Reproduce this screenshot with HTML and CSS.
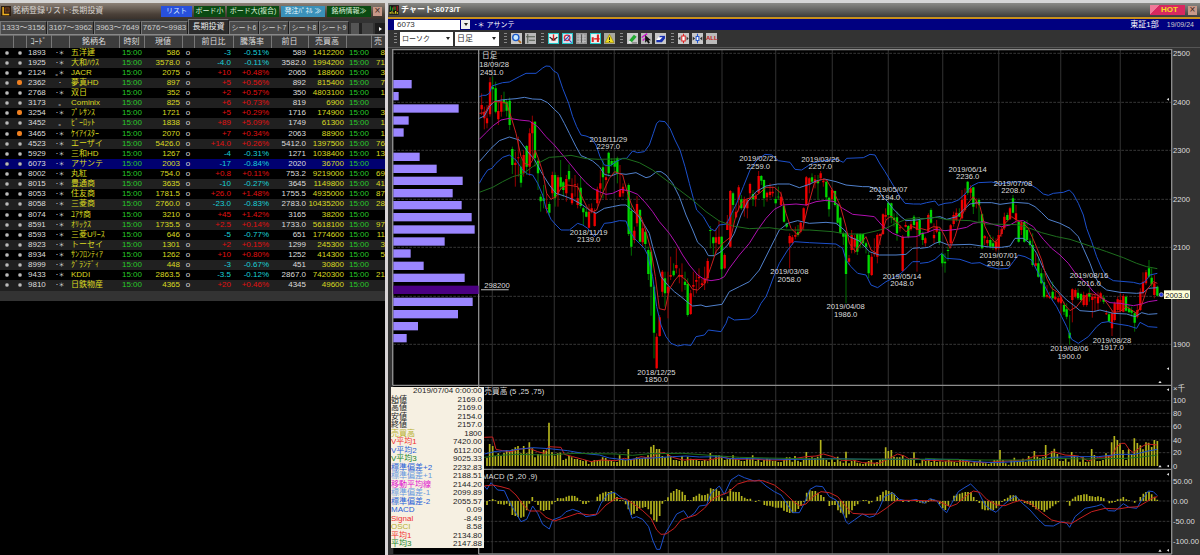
FILE: index.html
```html
<!DOCTYPE html>
<html lang="ja">
<head>
<meta charset="utf-8">
<title>チャート:6073/T</title>
<link rel="stylesheet" href="styles.css">
</head>
<body>
<main class="desk">
  <section class="panel list-panel">
    <header class="titlebar">
      <svg class="app-icon" viewBox="0 0 33 33"><rect width="33" height="33" fill="#2a1d12"/><path d="M7 3v25h20" fill="none" stroke="#f0b020" stroke-width="5"/><path d="M14 6h13v14H14z" fill="#402a18" stroke="#9a4a20" stroke-width="2"/></svg>
      <h1 class="title">銘柄登録リスト:長期投資</h1>
      <button class="chip chip-blue">リスト</button>
      <button class="chip chip-green">ボード小</button>
      <button class="chip chip-green chip-wide">ボード大(複合)</button>
      <button class="chip chip-sky">発注ﾊﾟﾈﾙ ≫</button>
      <button class="chip chip-green chip-mid">銘柄情報≫</button>
      <button class="close" aria-label="閉じる">×</button>
    </header>
    <nav class="tabs">
      <button class="tab tab-long">1333～3156</button><button class="tab tab-long">3167～3962</button><button class="tab tab-long">3963～7649</button><button class="tab tab-long">7676～9983</button><button class="tab tab-on">長期投資</button><button class="tab">シート6</button><button class="tab">シート7</button><button class="tab">シート8</button><button class="tab">シート9</button>
      <span class="tab-track"></span><button class="tab-next" aria-label="次へ"></button>
    </nav>
    <table class="quotes">
      <colgroup><col class="w13"><col class="w13"><col class="w25"><col class="w18"><col class="w50"><col class="w25"><col class="w38"><col class="w12"><col class="w39"><col class="w38"><col class="w37"><col class="w38"><col class="w25"><col class="w14"></colgroup>
      <thead><tr><th></th><th></th><th>ｺｰﾄﾞ</th><th></th><th>銘柄名</th><th>時刻</th><th>現値</th><th></th><th>前日比</th><th>騰落率</th><th>前日</th><th>売買高</th><th></th><th>売</th></tr></thead>
      <tbody id="quotes"></tbody>
    </table>
    <div class="list-foot"></div>
  </section>

  <section class="panel chart-panel">
    <header class="titlebar titlebar-gray">
      <svg class="app-icon" viewBox="0 0 33 33"><rect width="33" height="33" fill="#111" stroke="#777"/><path d="M5 4v14M12 8v12M20 5v12" stroke="#1f9a2c" stroke-width="4"/><path d="M16 5v10M27 3v17" stroke="#d22" stroke-width="3"/><path d="M4 29v-6M10 29v-8M16 29v-4M22 29v-9M28 29v-5" stroke="#e0d020" stroke-width="4"/></svg>
      <h2 class="title title-bold">チャート:6073/T</h2>
      <button class="hot">HOT</button>
      <button class="close" aria-label="閉じる">×</button>
    </header>
    <div class="symbolbar">
      <input class="code" value="6073" aria-label="銘柄コード"><button class="drop" aria-label="銘柄一覧"></button>
      <span class="symbol">･＊ アサンテ</span>
      <span class="market">東証1部</span>
      <span class="date">19/09/24</span>
    </div>
    <div class="toolbar">
      <i class="grip"></i>
      <label class="pick pick-wide"><select aria-label="チャート種類"><option>ローソク</option></select></label>
      <label class="pick"><select aria-label="足種"><option>日足</option></select></label>
      <div class="tools">
        <i class="grip"></i>
        <button class="tool" aria-label="拡大"><svg viewBox="0 0 32 32"><rect width="32" height="32" fill="#c8c8c8"/><path d="M20 20l9 9" stroke="#b06a20" stroke-width="5"/><circle cx="14" cy="13" r="9" fill="#c8e8ff" stroke="#1858c8" stroke-width="4"/></svg></button>
        <button class="tool" aria-label="目盛"><svg viewBox="0 0 32 32"><rect width="32" height="32" fill="#b8b8b8"/><path d="M8 3v27M3 11h26M12 21h17" stroke="#50584c" stroke-width="3"/></svg></button>
      </div>
      <div class="tools">
        <i class="grip"></i>
        <button class="tool" aria-label="売買"><svg viewBox="0 0 32 32"><rect width="32" height="32" fill="#28c8c8"/><rect x="3" y="3" width="26" height="26" fill="#eee"/><path d="M5 12q11 12 22 0M10 20h12" fill="none" stroke="#222" stroke-width="4"/><path d="M16 4v19" stroke="#d22" stroke-width="4"/></svg></button>
        <button class="tool" aria-label="検索"><svg viewBox="0 0 32 32"><rect width="32" height="32" fill="#28c8c8"/><rect x="3" y="3" width="26" height="26" fill="#dde"/><circle cx="15" cy="14" r="8" fill="#eee" stroke="#d03040" stroke-width="4"/><path d="M6 23l16-16M17 16l11 12" stroke="#2548c0" stroke-width="3"/></svg></button>
        <button class="tool" aria-label="表"><svg viewBox="0 0 32 32"><rect width="32" height="32" fill="#999"/><path d="M3 9h26M3 17h26M3 25h26M11 3v27M21 3v27" stroke="#bbb" stroke-width="3"/><path d="M16 4v24" stroke="#555" stroke-width="3"/></svg></button>
        <button class="tool" aria-label="比較"><svg viewBox="0 0 32 32"><rect width="32" height="32" fill="#28c8c8"/><rect x="3" y="3" width="26" height="26" fill="#eee"/><path d="M8 12v14M23 4v22" stroke="#d22" stroke-width="6"/><path d="M12 17h16" stroke="#d22" stroke-width="4"/></svg></button>
        <button class="tool" aria-label="警告"><svg viewBox="0 0 32 32"><rect width="32" height="32" fill="#a8a8a0"/><path d="M16 4L29 28H3z" fill="#f0e020" stroke="#a08800" stroke-width="2"/><path d="M16 12v8M16 23v3" stroke="#222" stroke-width="3"/></svg></button>
      </div>
      <div class="tools">
        <i class="grip"></i>
        <button class="tool" aria-label="描画"><svg viewBox="0 0 32 32"><rect width="32" height="32" fill="#c8c8c8"/><path d="M6 22L20 5l8 6-14 16z" fill="#20a830"/><path d="M6 22l-2 8 10-3z" fill="#eee"/><path d="M14 29h15" stroke="#333" stroke-width="2"/></svg></button>
        <button class="tool" aria-label="選択"><svg viewBox="0 0 32 32"><rect width="32" height="32" fill="#b8b8b8"/><path d="M2 13L18 2M5 22l6-6" stroke="#d010d0" stroke-width="4"/><path d="M12 6v22l5-5 4 8 5-3-4-7h7z" fill="#111"/></svg></button>
        <button class="tool" aria-label="消去"><svg viewBox="0 0 32 32"><rect width="32" height="32" fill="#c8c8c8"/><path d="M4 20l10-13h15L19 20z" fill="#fff"/><path d="M4 20h10l8-8H12l2-4h15v8l-9 11H4z" fill="#1830b0"/></svg></button>
      </div>
      <div class="tools">
        <i class="grip"></i>
        <button class="tool" aria-label="広げる"><svg viewBox="0 0 32 32"><rect width="32" height="32" fill="#c8c8c8"/><path d="M11 9h10v14H11z" fill="#fff" stroke="#d22" stroke-width="3"/><path d="M16 2v7M16 23v7" stroke="#d22" stroke-width="3"/><path d="M7 10v12l-6-6zM25 10v12l6-6z" fill="#333"/></svg></button>
        <button class="tool" aria-label="狭める"><svg viewBox="0 0 32 32"><rect width="32" height="32" fill="#c8c8c8"/><path d="M12 10h8v12h-8z" fill="#fff" stroke="#25c" stroke-width="3"/><path d="M16 2v7M16 23v7" stroke="#25c" stroke-width="3"/><path d="M2 10v12l7-6zM30 10v12l-7-6z" fill="#333"/></svg></button>
        <button class="tool tool-all">ALL</button>
      </div>
    </div>
    <div class="chart-wrap">
      <svg id="chart" class="chart" viewBox="6 -6 2436 1521" role="img" aria-label="日足チャート"></svg>
      <table class="readout">
        <tr><td colspan="2">2019/07/04 0:00:00</td></tr>
        <tr><th>始値</th><td>2169.0</td></tr>
        <tr><th>高値</th><td>2169.0</td></tr>
        <tr><th>安値</th><td>2154.0</td></tr>
        <tr><th>終値</th><td>2157.0</td></tr>
        <tr><th class="c-olive">売買高</th><td>1800</td></tr>
        <tr><th class="c-red">V平均1</th><td>7420.00</td></tr>
        <tr><th class="c-blue">V平均2</th><td>6112.00</td></tr>
        <tr><th class="c-green">V平均3</th><td>9025.33</td></tr>
        <tr><th class="c-blue">標準偏差+2</th><td>2232.83</td></tr>
        <tr><th class="c-sky">標準偏差+1</th><td>2188.51</td></tr>
        <tr><th class="c-pink">移動平均線</th><td>2144.20</td></tr>
        <tr><th class="c-sky">標準偏差-1</th><td>2099.89</td></tr>
        <tr><th class="c-blue">標準偏差-2</th><td>2055.57</td></tr>
        <tr><th class="c-blue">MACD</th><td>0.09</td></tr>
        <tr><th class="c-red">Signal</th><td>-8.49</td></tr>
        <tr><th class="c-olive">OSCI</th><td>8.58</td></tr>
        <tr><th class="c-red">平均1</th><td>2134.80</td></tr>
        <tr><th class="c-green">平均3</th><td>2147.88</td></tr>
      </table>
    </div>
  </section>
</main>
<script src="app.js"></script>
</body>
</html>
```
FILE: styles.css
```css
* { box-sizing: border-box; }
body { margin: 0; background: #000; color: #ddd; font-family: "Liberation Sans", "Noto Sans CJK JP", sans-serif; font-size: 8px; line-height: 10px; }
button, input, select { font: inherit; color: inherit; border: 0; border-radius: 0; padding: 0; margin: 0; }
.desk { display: grid; grid-template-columns: minmax(0, 388fr) minmax(0, 812fr); min-height: 100vh; border-top: 3px solid #d6d6d6; }
.panel { min-width: 0; overflow: hidden; }
.list-panel { background: #000; border-right: 3px solid #d8d4d6; }
.titlebar { display: flex; align-items: center; height: 16px; padding: 0 3px 0 1px; gap: 2px; background: linear-gradient(#8c8177, #4a4038 70%, #3a322c); }
.titlebar-gray { height: 14px; background: linear-gradient(#8a8a86, #3c3c3a); }
.app-icon { width: 10px; height: 10px; flex: none; }
.title { margin: 0 auto 0 0; font-size: 8px; font-weight: 400; color: #d8d4d0; white-space: nowrap; }
.title-bold { font-weight: 700; color: #fff; }
.chip { height: 11px; width: 31px; font-size: 7px; line-height: 10px; color: #d8f0d8; white-space: nowrap; }
.chip-blue { background: #2850dc; color: #d8e8ff; }
.chip-green { background: #0a4a12; }
.chip-wide { width: 52px; }
.chip-mid { width: 44px; }
.chip-sky { background: #3a90b8; width: 44px; color: #e8f8ff; }
.close { width: 9px; height: 9px; line-height: 8px; font-size: 10px; background: #c89888; color: #402820; }
.tabs { display: flex; align-items: flex-end; height: 16px; background: #333; border-bottom: 1px solid #888; overflow: hidden; }
.tab { flex: 0 0 30px; height: 13px; white-space: nowrap; background: #4a4a4a; border: 1px solid #777; border-right-color: #1c1c1c; border-bottom: 0; color: #ccc; font-size: 7px; line-height: 12px; }
.tab-long { flex-basis: 47px; font-size: 8px; }
.tab-on { flex-basis: 41px; height: 15px; background: #2c2c2c; color: #eee; font-size: 8px; }
.tab-track { flex: 1; height: 11px; margin: 0 2px; background: linear-gradient(90deg, #555 8px, #222 8px, #222 11px, #444 11px); }
.tab-next { width: 10px; height: 11px; background: #1c1c1c; }
.tab-next::before { content: ""; display: block; width: 0; margin-left: 4px; border: 2px solid transparent; border-left: 3px solid #fff; }

.quotes { width: 100%; table-layout: fixed; border-collapse: collapse; }
.w12 { width: 12px; } .w13 { width: 13px; } .w14 { width: 14px; } .w18 { width: 18px; } .w25 { width: 25px; }
.w37 { width: 37px; } .w38 { width: 38px; } .w39 { width: 39px; } .w50 { width: 50px; }
.quotes th { height: 12px; padding: 0; background: #3c3c3c; border-right: 1px solid #777; border-top: 1px solid #666; font-weight: 400; line-height: 10px; color: #ddd; white-space: nowrap; }
.quotes td { height: 10px; padding: 0; line-height: 10px; font-size: 8px; text-align: right; white-space: nowrap; }
.quotes tr:nth-child(8n) td { height: 11px; }
.quotes tr:nth-child(even) td { background: #202020; }
.quotes tr.on td { background: #000070; }
.quotes .l { text-align: left; padding-left: 2px; }
.quotes .c { text-align: center; }
.quotes .mark { text-align: center; font-size: 6px; }
.yellow { color: #dada20; } .green { color: #28c828; } .cyan { color: #18d0d8; } .red { color: #e01010; } .white { color: #ddd; }
.quotes .pad { padding-right: 2px; }
.dot { display: block; width: 4px; height: 4px; margin: 0 auto; border-radius: 2px; background: radial-gradient(#ddd, #555); }
.dot-hot { width: 5px; height: 5px; background: #f08020; }
.list-foot { height: 10px; background: #333; }

.chart-panel { background: #333; }
.symbolbar { display: flex; align-items: center; height: 13px; padding: 0 6px; border-top: 2px solid #c8901c; background: #000080; color: #fff; }
.code { width: 66px; height: 10px; padding: 0 3px; background: #fff; color: #333; }
.drop { width: 9px; height: 9px; margin: 0 4px 0 1px; background: #eee; }
.drop::before, .pick::after { content: ""; display: block; width: 0; margin: 0 auto; border: 2px solid transparent; border-top: 3px solid #222; border-bottom: 0; }
.symbol { margin-right: auto; font-size: 7px; }
.market { margin-right: 8px; }
.date { color: #ccc; font-size: 7px; }
.toolbar { display: flex; align-items: center; height: 18px; padding-left: 5px; gap: 2px; border-bottom: 1px solid #555; }
.grip { width: 3px; height: 11px; margin: 0 1px; background: repeating-linear-gradient(#888 0 1px, #333 1px 3px); }
.pick { display: flex; align-items: center; width: 44px; height: 14px; background: #fff; }
.pick-wide { width: 53px; font-size: 7px; }
.pick select { flex: 1; min-width: 0; padding-left: 2px; appearance: none; background: none; color: #333; }
.pick::after { margin: 0 3px 0 0; }
.tools { display: flex; align-items: center; gap: 3px; margin-left: 2px; }
.tool { width: 11px; height: 11px; background: #bbb; }
.tool svg { display: block; width: 11px; height: 11px; }
.tool-all { color: #c01818; font-size: 6px; font-weight: 700; line-height: 11px; }
.hot { width: 35px; height: 10px; line-height: 10px; margin-right: 1px; padding-left: 4px; background: linear-gradient(135deg, #f07898 7px, #d82860 7px); color: #f0e020; font-weight: 700; }

.chart-wrap { position: relative; }
.chart { display: block; width: 100%; height: auto; }
.chart text { font-family: "Liberation Sans", "Noto Sans CJK JP", sans-serif; font-size: 23px; fill: #ddd; }
.chart .mid { text-anchor: middle; }
.chart .tag { fill: #222; }
.chart polyline { fill: none; stroke-width: 3; }
.grid { stroke: #363636; stroke-width: 3; fill: none; }
.grid-v { stroke: #262626; stroke-width: 4; fill: none; }
.frame { stroke: #8c8c8c; stroke-width: 4; fill: none; }
.s-blue { stroke: #1c50cc; } .s-sky { stroke: #5080cc; } .s-pink { stroke: #b010b0; } .s-green { stroke: #1e6e1e; } .s-red { stroke: #c82020; }
.up-w { stroke: #960000; stroke-width: 3; } .up-b { stroke: #f00000; stroke-width: 7; }
.dn-w { stroke: #006e00; stroke-width: 3; } .dn-b { stroke: #00d800; stroke-width: 7; }
.bar { stroke: #b4b41c; stroke-width: 5; }
.readout { position: absolute; left: 3px; top: 339px; width: 93px; border-collapse: collapse; background: #f6f0e2; color: #222; }
.readout th, .readout td { padding: 0; height: 8px; line-height: 8px; font-weight: 400; text-align: left; white-space: nowrap; }
.readout tr:nth-child(even) > * { height: 9px; line-height: 9px; }
.readout td { text-align: right; padding-right: 2px; }
.readout .c-olive { color: #b8b030; } .readout .c-red { color: #f03030; } .readout .c-blue { color: #2860d8; }
.readout .c-green { color: #208828; } .readout .c-sky { color: #6898e0; } .readout .c-pink { color: #e010d0; }
```
FILE: app.js
```js
const quotes = `1893|･＊|五洋建|586|-3|-0.51%|589|1412200|8
1925|･＊|大和ﾊｳｽ|3578.0|-4.0|-0.11%|3582.0|1994200|71
2124|｡＊|JACR|2075|+10|+0.48%|2065|188600|3
2362|･|夢真HD|897|+5|+0.56%|892|815400|7
2768|･＊|双日|352|+2|+0.57%|350|4803100|1
3173|｡|Cominix|825|+6|+0.73%|819|6900|
3254|･＊|ﾌﾟﾚｻﾝｽ|1721|+5|+0.29%|1716|174900|3
3452|｡|ﾋﾞｰﾛｯﾄ|1838|+89|+5.09%|1749|61300|1
3465|･＊|ｹｲｱｲｽﾀｰ|2070|+7|+0.34%|2063|88900|1
4523|･＊|エーザイ|5426.0|+14.0|+0.26%|5412.0|1397500|76
5929|･＊|三和HD|1267|-4|-0.31%|1271|1038400|13
6073|･＊|アサンテ|2003|-17|-0.84%|2020|36700|
8002|･＊|丸紅|754.0|+0.8|+0.11%|753.2|9219000|69
8015|･＊|豊通商|3635|-10|-0.27%|3645|1149800|41
8053|･＊|住友商|1781.5|+26.0|+1.48%|1755.5|4935000|87
8058|･＊|三菱商|2760.0|-23.0|-0.83%|2783.0|10435200|28
8074|･＊|ﾕｱｻ商|3210|+45|+1.42%|3165|38200|
8591|･＊|ｵﾘｯｸｽ|1735.5|+2.5|+0.14%|1733.0|5618100|97
8593|･＊|三菱Uﾘｰｽ|646|-5|-0.77%|651|1774600|11
8923|･＊|トーセイ|1301|+2|+0.15%|1299|245300|3
8934|･＊|ｻﾝﾌﾛﾝﾃｨｱ|1262|+10|+0.80%|1252|414300|5
8999|･＊|ｸﾞﾗﾝﾃﾞｨ|448|-3|-0.67%|451|30800|
9433|･＊|KDDI|2863.5|-3.5|-0.12%|2867.0|7420300|21
9810|･＊|日鉄物産|4365|+20|+0.46%|4345|49600|`.split('\n').map(r => r.split('|'));
const hot = ['2362', '3254', '3465'];
document.getElementById('quotes').innerHTML = quotes.map(q => {
  const tone = q[4][0] === '+' ? 'red' : 'cyan';
  return `<tr class="${q[0] === '6073' ? 'on' : ''}"><td><i class="dot"></i></td><td><i class="dot ${hot.includes(q[0]) ? 'dot-hot' : ''}"></i></td>
<td class="l white">${q[0]}</td><td class="mark white">${q[1]}</td><td class="l yellow">${q[2]}</td><td class="pad green">15:00</td><td class="pad yellow">${q[3]}</td><td class="c white">o</td>
<td class="pad ${tone}">${q[4]}</td><td class="pad ${tone}">${q[5]}</td><td class="pad white">${q[6]}</td><td class="pad yellow">${q[7]}</td><td class="pad green">15:00</td><td class="yellow">${q[8]}</td></tr>`;
}).join('');

let out = '';
const add = s => { out += s; };
const path = (cls, d) => add(`<path class="${cls}" d="${d}"/>`);
const text = (x, y, s, cls = '') => add(`<text class="${cls}" x="${x}" y="${y}">${s}</text>`);

// plot areas, grid and frames
add('<rect x="22" y="0" width="2335" height="1512" fill="#000"/>');
path('grid-v', [319, 505, 685, 847, 1008, 1169, 1339, 1507, 1670, 1838, 2024, 2203].map(x => `M${x} 0V1512`).join(''));
add(`<path class="grid" stroke-dasharray="8 4" d="${[[22, 10], [22, 157], [22, 301], [22, 448], [22, 592], [22, 739], [22, 883], [278, 1052], [278, 1090], [278, 1130], [278, 1170], [278, 1208], [278, 1293], [278, 1353], [278, 1414], [278, 1475]].map(p => `M${p[0]} ${p[1]}H2357`).join('')}"/>`);
path('frame', 'M20 1006V-1H2357V1512M278 0V1512M20 1006H2357M278 1258H2357M278 1512H2357');

// volume by price
[77, 38, 218, 68, 53, 0, 101, 152, 230, 200, 227, 257, 266, 176, 74, 113, 236, 278, 260, 216, 96, 62].forEach((x, i) => {
  if (x) add(`<rect x="22" y="${Math.round(90 + i * 36.3)}" width="${x - 22}" height="25" fill="${i === 17 ? '#4b0082' : '#9b86ff'}"/>`);
});
text(295, 715, '298200');
path('frame', 'M285 719H368');

// overlays: [class, dx, dy, points]
const lines = [
['s-blue', 0, 0, '280,140 290,136 300,136 310,130 318,108 330,104 350,98 370,96 400,80 420,70 450,70 470,54 480,48 492,49 502,62 515,70 530,115 548,160 560,200 572,230 585,255 600,258 615,264 630,285 642,320 655,345 672,348 690,335 710,325 722,325 740,303 755,308 775,305 790,285 802,250 812,220 820,213 837,215 852,235 867,270 882,300 897,350 910,400 922,445 932,480 952,500 972,535 987,543 999,525 1022,522 1037,490 1052,460 1072,410 1092,360 1112,330 1137,313 1157,315 1177,332 1212,337 1227,358 1247,360 1267,347 1282,338 1312,332 1352,328 1372,337 1382,325 1432,323 1452,313 1467,315 1482,342 1497,365 1512,390 1527,415 1542,440 1557,460 1582,462 1602,462'],
['s-blue', 1602, 210, '0,253 20,248 45,243 55,256 75,250 95,248 115,240 135,222 155,198 175,188 215,186 240,192 270,186 300,186 325,190 350,205 370,222 385,226 400,220 430,217 448,210 460,222 475,250 490,285 500,325 515,365 530,410 545,445 560,470 580,482 640,487 660,492 675,485 690,465 712,460'],
['s-sky', 0, 0, '280,205 295,198 310,170 325,155 345,150 365,148 390,146 415,142 440,147 465,148 485,158 505,178 520,192 535,220 550,250 570,290 585,317 600,323 620,333 640,350 655,373 675,378 695,370 720,373 750,368 780,383 792,380 812,365 825,365 840,375 860,400 880,440 900,495 920,540 935,577 955,595 967,617 985,617 1005,605 1025,585 1045,550 1065,495 1085,455 1110,425 1140,408 1175,402 1210,402 1240,413 1270,403 1290,393 1315,387 1350,395 1380,405 1430,410 1450,410 1475,418 1490,440 1505,455 1520,475 1545,500 1560,512 1590,510 1602,508'],
['s-sky', 1602, 210, '0,297 25,295 60,290 80,298 110,290 130,270 150,252 175,248 215,248 240,253 285,247 325,250 345,260 365,278 385,298 420,310 450,325 475,350 490,385 510,430 525,470 540,495 560,510 600,517 650,520 670,518 685,505 712,503'],
['s-pink', 0, 0, '280,268 300,248 320,228 345,210 370,205 400,210 430,213 455,230 480,260 505,285 530,315 555,345 575,370 600,398 620,415 640,425 660,433 680,430 705,418 730,423 755,433 780,460 800,485 820,515 850,550 870,580 890,615 910,645 935,675 955,688 975,692 1000,688 1015,680 1030,655 1060,615 1090,580 1115,540 1140,505 1165,478 1190,465 1230,462 1260,465 1290,455 1320,451 1345,455 1370,475 1400,493 1440,497 1465,500 1490,528 1520,550 1550,562 1590,560 1602,555'],
['s-pink', 1602, 210, '0,342 20,338 45,328 75,332 110,328 140,322 160,310 190,305 215,312 245,320 270,315 290,303 310,302 340,320 370,358 395,385 420,405 445,430 470,465 500,490 520,515 545,535 570,548 600,550 640,557 665,552 685,545 712,541'],
['s-sky', 0, 0, '280,335 295,318 315,295 340,272 370,261 400,270 425,305 445,328 465,365 490,405 510,430 535,438 560,448 590,465 610,480 630,490 655,475 680,470 705,465 720,465 735,478 755,495 775,525 790,550 800,590 812,630 825,680 845,705 865,725 885,740 905,757 920,768 945,765 960,770 1008,763 1030,725 1060,710 1090,695 1120,660 1150,600 1180,540 1205,520 1235,512 1270,520 1320,517 1350,520 1375,540 1390,560 1420,573 1450,605 1480,615 1530,615 1560,613 1580,595 1602,593'],
['s-sky', 1602, 210, '0,385 25,382 45,370 60,365 85,375 150,373 185,378 215,382 245,382 270,378 285,355 310,355 330,370 350,400 370,445 395,490 420,520 440,540 460,555 480,572 520,575 540,570 580,580 620,582 645,590 665,578 685,583 712,581'],
['s-blue', 0, 0, '280,400 290,382 305,360 318,355 330,340 350,322 370,315 390,330 410,360 425,372 440,375 455,400 470,435 480,475 495,508 510,525 525,540 550,540 575,520 590,525 605,535 625,560 640,545 655,520 675,518 700,512 720,513 730,540 745,565 760,580 775,595 785,615 800,680 812,770 825,825 840,860 855,880 875,888 895,884 915,886 930,860 955,855 967,840 1005,845 1020,820 1027,800 1045,810 1090,807 1110,790 1125,760 1140,740 1150,715 1165,675 1180,640 1205,600 1225,575 1270,578 1350,582 1370,595 1380,630 1395,650 1415,670 1440,675 1455,705 1475,713 1500,695 1520,685 1545,670 1565,650 1580,635 1602,635'],
['s-blue', 1602, 210, '0,430 25,427 45,418 65,400 80,415 120,418 155,430 180,428 205,440 235,447 265,445 280,425 295,405 315,410 335,420 350,450 370,490 390,530 410,560 425,590 440,620 455,658 475,670 490,660 505,650 530,620 545,608 565,605 580,610 625,617 650,625 660,607 685,620 712,622'],
['s-green', 0, 0, '280,427 320,412 350,395 380,380 410,372 440,350 465,335 490,322 520,320 555,316 600,326 640,328 720,326 760,338 800,360 840,390 880,420 920,450 960,485 1000,513 1040,528 1090,536 1150,533 1200,540 1270,540 1340,545 1380,552 1430,552 1470,543 1500,535 1530,520 1560,508 1602,503'],
['s-green', 1602, 210, '0,297 50,292 80,299 150,302 200,312 290,314 330,325 365,338 410,350 450,358 510,378 560,395 610,413 650,430 680,440 712,446'],
['s-red', 0, 0, '280,190 297,188 310,165 325,155 345,155 362,160 375,200 390,250 405,320 415,340 430,345 440,330 447,300 457,325 470,365 482,430 495,448 510,440 525,415 545,405 575,410 590,445 605,475 620,485 632,480 650,430 670,385 686,365 710,375 722,420 735,460 750,490 765,500 780,545 795,600 808,680 820,776 837,780 850,718 867,690 880,675 900,690 920,718 935,720 957,700 975,650 990,605 1010,580 1035,560 1050,495 1065,460 1080,448 1105,440 1120,430 1140,412 1165,412 1185,430 1200,490 1215,535 1235,555 1250,535 1267,465 1285,400 1305,388 1322,390 1345,430 1362,465 1380,530 1390,580 1408,605 1425,580 1440,560 1455,600 1472,610 1485,560 1500,510 1515,498 1535,520 1560,545 1580,530 1602,540'],
['s-red', 1602, 210, '0,325 20,330 40,320 60,322 75,350 90,385 105,350 120,300 140,255 160,230 180,260 195,320 210,350 225,367 240,350 255,310 275,290 290,300 310,310 325,325 345,370 365,420 380,475 395,505 415,518 435,555 450,572 470,560 485,540 505,520 530,525 550,535 565,555 580,577 600,575 620,560 635,570 650,580 665,555 680,510 700,485 712,490'],
['s-red', 0, 990, '295,172 320,171 330,208 350,212 375,215 400,207 430,205 455,215 475,220 488,200 525,202 535,223 560,230 590,238 615,245 645,240 690,242 715,235 740,240 765,230 795,235 815,220 835,218 860,232 890,240 930,238 965,240 1010,232 1050,238 1100,237 1140,240 1200,240 1260,230 1290,228 1312,222 1340,230 1370,242 1400,240 1430,248 1480,250 1510,235 1535,222 1555,228 1570,237 1590,235 1617,242'],
['s-blue', 0, 990, '295,222 330,214 370,212 395,208 440,203 490,206 545,212 590,220 640,225 670,234 720,240 760,235 800,234 860,230 900,228 940,231 1000,230 1030,236 1100,236 1200,238 1280,238 1340,236 1450,238 1617,238'],
['s-green', 0, 990, '295,232 340,226 390,223 480,225 570,220 690,222 740,226 790,221 890,220 960,225 1060,232 1150,234 1300,237 1617,238'],
['s-red', 1617, 990, '0,240 60,243 120,244 180,248 230,244 300,240 330,228 365,226 385,215 420,225 460,228 490,243 520,232 560,230 575,200 590,190 600,190 612,208 625,218 645,203 665,192 697,195'],
['s-blue', 1617, 990, '0,238 100,238 150,245 210,248 270,245 340,240 380,232 450,230 520,230 580,223 630,223 665,214 697,208'],
['s-green', 1617, 990, '0,235 60,238 180,240 300,240 380,235 480,237 600,235 640,232 697,225'],
['s-blue', 0, 990, '295,318 303,328 315,308 335,330 355,332 370,365 390,400 405,425 422,418 440,378 455,400 470,433 490,447 500,420 525,410 540,395 560,388 580,395 600,410 630,405 645,370 665,342 685,337 705,352 722,362 738,415 752,410 770,418 788,440 800,480 812,508 822,508 835,465 850,440 872,402 893,392 907,413 925,400 940,378 962,375 975,340 1000,318 1015,343 1035,300 1058,285 1075,293 1105,303 1120,300 1140,318 1165,335 1185,345 1205,375 1220,398 1240,398 1255,370 1272,328 1290,318 1310,320 1330,350 1350,360 1370,395 1380,425 1388,432 1405,420 1430,402 1450,412 1465,408 1480,385 1495,350 1520,338 1540,358 1565,363 1590,358 1617,370'],
['s-red', 0, 990, '295,318 320,315 345,320 370,327 390,345 410,372 430,393 460,393 480,412 505,423 540,412 575,400 610,405 635,402 660,375 690,355 720,357 740,370 770,392 795,415 812,450 825,463 840,462 865,445 885,420 905,413 930,405 955,385 980,357 1000,347 1025,338 1055,312 1085,303 1130,302 1165,315 1195,338 1220,362 1240,377 1260,372 1280,350 1305,335 1330,338 1355,350 1380,380 1400,400 1440,403 1475,402 1500,385 1530,362 1560,361 1617,362'],
['s-blue', 1617, 990, '0,368 15,356 35,362 50,385 65,398 80,370 100,335 120,322 137,312 160,335 180,375 195,387 213,397 235,375 255,358 272,347 290,368 315,390 340,418 360,437 385,438 410,425 425,430 434,442 450,410 480,385 515,378 530,373 550,392 570,393 595,371 612,382 635,385 650,360 670,333 685,335 697,347'],
['s-red', 1617, 990, '0,362 40,363 75,380 95,372 120,350 145,333 165,337 185,358 215,375 240,377 265,367 290,360 320,373 350,398 380,420 410,427 440,430 465,415 500,395 540,385 580,387 610,382 640,380 665,365 680,355 697,350']
];

// candles: direction, x, high, body top, body bottom, low
const candles = [
[0, 0, 'r287,130,165,178,195 r295,170,185,205,238 r303,165,205,220,235 r312,82,97,193,200 g320,80,110,118,150 g329,95,115,185,190 r337,155,183,208,225 r346,135,155,185,200 g354,125,150,160,185 g362,150,155,182,200 g371,143,152,225,240 g379,290,297,345,372 r388,305,338,345,410 r397,260,322,325,380 g405,325,350,398,412 r413,300,315,370,380 g422,285,288,350,375 r431,235,250,350,378 r439,197,215,250,330 g447,213,215,325,350 g456,325,332,370,420 g464,432,440,454,485 g473,405,445,453,475 r482,430,473,476,490 g490,455,462,488,498 r499,365,375,430,445 g507,367,375,445,470 r516,375,382,432,470 g524,330,382,410,420 g532,393,397,420,440 r541,375,387,430,455 g549,343,363,388,395 r558,385,430,460,465 r567,375,403,406,440 r575,400,445,465,475 g584,380,413,468,475 g592,470,475,487,528 g601,475,485,500,502 r609,462,485,533,535 r617,460,475,487,490 r626,475,488,528,530 r634,410,418,460,470 r643,360,400,416,440 g651,330,352,382,445 r660,345,382,390,450 g668,305,308,370,380 g677,325,333,345,350 g686,325,332,350,375 g694,320,325,370,400 r702,345,420,440,442 r711,400,410,430,440 g728,400,405,552,558 g736,460,482,590,617 r745,530,542,570,580 r753,438,462,520,530 g762,477,480,575,577 r770,515,535,577,590 g778,540,545,582,597 g787,590,600,672,690 g795,600,605,710,797 g804,705,710,848,925'],
[792, 210, 'r20,640,650,745,748 r29,585,592,648,650 r37,450,455,515,530 g45,455,475,520,560 r54,455,500,520,595 r62,410,465,470,480 g71,430,452,466,470 r79,385,435,445,460 r88,445,465,470,490 r96,430,465,470,515 g105,455,485,495,510 g113,475,492,585,590 r122,510,520,582,585 r130,455,495,500,530 r139,460,480,485,520 r147,445,470,475,505 r156,475,490,495,500 r164,440,475,490,510 r173,415,423,475,490 g181,318,330,333,385 g190,350,352,370,410 r198,325,352,368,400 r207,300,350,372,375 g215,348,350,448,475 r224,400,405,445,448 r232,285,305,330,330 r241,210,213,380,383 g249,215,220,255,320 r258,250,275,292,295 r266,195,202,240,275 g274,225,238,265,270 r283,230,238,265,290 r292,235,240,265,295 r300,188,192,220,240 g309,210,222,238,258 r317,218,228,238,260 r326,153,168,218,222 g334,165,168,182,195 g342,178,180,235,260 r351,215,218,232,245 r360,190,215,225,235 r368,200,215,220,230 g377,230,237,250,253 g385,200,230,232,240 r393,215,230,255,258 g402,250,258,305,308 g410,308,310,320,325 r419,340,348,370,445 r427,345,352,368,375 r436,320,345,350,358 g444,315,337,345,350 r452,305,308,335,340 r461,262,265,303,330 r469,168,172,256,258 r478,172,175,195,220 g486,160,172,185,190 r495,165,178,188,205 g504,165,183,190,240 r512,153,160,175,178 r520,175,182,187,200 g529,183,185,232,245 g537,230,233,268,290 r546,205,210,238,245 g555,212,213,255,260 g563,250,253,308,312 g571,290,293,338,342 g580,335,340,350,375 g588,335,340,462,550 r597,405,415,425,435 r605,330,345,390,400 r614,345,355,380,400 g622,340,342,395,405 g631,340,342,365,385 g639,340,342,370,380 g648,365,370,380,400 g656,395,405,460,475 r665,400,410,465,468 r673,355,400,403,410 r682,340,345,410,430 r690,340,342,348,375 r699,280,283,342,345 r707,265,285,290,300 g715,245,248,285,295 g724,248,250,293,310 g732,280,293,300,320 g741,275,292,340,362 r750,315,322,325,335 r758,345,350,453,455 r767,305,315,320,322 g775,315,318,350,355 r783,300,313,328,332 g792,285,290,315,325 r801,298,305,330,455 g809,295,300,345,350 g818,335,338,360,375 r826,350,355,370,380'],
[1602, 210, 'r25,280,285,335,338 g33,265,270,308,312 r42,310,345,355,370 r50,300,320,335,340 g58,325,335,368,375 g67,395,402,430,440 g75,400,425,430,458 g84,380,390,393,422 r92,312,316,370,375 r101,275,285,312,320 r109,265,278,300,305 g118,265,280,290,290 r126,210,240,295,298 r135,205,225,270,275 g143,183,185,218,225 r152,195,205,218,235 g160,200,202,260,282 r169,235,245,250,265 g177,235,240,255,310 g186,280,283,385,388 r194,345,348,355,375 r202,350,360,370,380 g211,345,360,380,385 g219,350,370,380,390 r228,355,365,388,395 r236,330,345,385,390 r245,320,328,342,350 r253,278,290,325,330 g262,278,285,300,305 r270,260,265,298,300 g279,225,235,278,280 r288,255,280,300,310 g296,300,305,365,368 r304,300,310,330,345 g313,303,306,365,368 g321,300,330,360,362 g330,355,362,375,380 g338,340,375,435,440 r347,400,430,437,440 g355,415,430,470,473 g364,445,460,490,493 g372,460,487,530,535 r381,495,525,530,535 r389,515,528,533,537 g398,485,515,535,540 r406,515,530,538,540 r415,530,535,545,550 r423,525,532,550,585 g432,545,555,575,585 g440,550,568,590,598 g449,585,638,655,675 r457,505,508,540,607 r466,505,510,530,535 g474,505,518,535,540 g483,518,522,540,548 r491,515,525,555,560 r500,520,525,555,560 g508,505,520,530,545 r517,525,530,540,593 r525,525,530,535,575 r534,515,530,550,570 r542,515,520,535,545 g551,525,533,545,552 r559,570,580,583,585 g567,575,583,605,607 r576,570,580,625,648 r584,545,550,600,605 r593,530,538,570,575 r601,520,540,572,575 r610,522,528,575,577 g618,527,530,572,575 g627,555,565,577,580 g635,560,570,578,590 g644,575,580,608,635 r652,555,570,590,595 r661,505,515,570,573 r669,457,485,520,530 r678,450,457,490,495 g687,420,445,470,475 g695,445,473,493,500 r703,465,490,525,535 g712,497,500,527,530']
];
const d = { rw: '', rb: '', gw: '', gb: '' };
candles.forEach(([dx, dy, s]) => s.split(' ').forEach(c => {
  const k = c[0], [x, h, t, b, l] = c.slice(1).split(',').map(Number);
  d[k + 'w'] += `M${x + dx} ${h + dy}V${l + dy}`;
  d[k + 'b'] += `M${x + dx} ${t + dy}V${b + dy}`;
}));
path('up-w', d.rw); path('dn-w', d.gw); path('up-b', d.rb); path('dn-b', d.gb);

// evenly spaced bars between two x positions
const bars = (x0, x1, base, tops) => path('bar', tops.map((t, i) => `M${Math.round(x0 + (x1 - x0) * i / (tops.length - 1))} ${base}V${t}`).join(''));
const volume = [
[303, 820, [233,192,198,228,220,228,219,211,215,208,202,198,220,198,220,187,205,232,222,224,210,212,128,217,227,220,218,240,236,228,232,237,237,240,243,240,252,246,240,240,240,232,234,240,243,245,246,226,240,240,207,240,236,232,236,235,232,226,200,195,207,207]],
[829, 1609, [228,232,222,230,240,240,243,228,243,230,236,238,240,243,243,240,243,219,238,226,226,228,240,238,236,226,238,240,243,243,232,238,226,243,236,246,240,236,238,243,243,246,246,240,232,232,245,228,242,246,240,216,235,232,234,230,180,234,240,246,236,246,230,244,248,215,250,243,240,248,250,252,248,243,240,250,246,240,236,202,213,210,230,232,232,225,240,240,234,217,250,250,240]],
[1619, 2314, [243,240,246,238,246,244,246,244,240,244,246,248,240,240,244,246,250,246,248,240,248,250,252,246,240,240,210,240,250,254,240,233,246,243,236,246,228,236,213,230,234,232,195,240,214,206,222,243,243,235,245,216,226,232,245,232,246,245,207,225,243,243,240,220,226,187,168,180,190,210,240,208,222,175,189,196,208,187,188,201,180,183]]
];
volume.forEach(([a, b, v]) => bars(a, b, 1248, v.map(t => t + 990)));
const osci = [
[303, 829, [-12,3,6,2,-9,-10,-11,-8,-15,-42,-45,-48,-50,-47,-28,-8,12,-2,-12,-28,-30,-27,-27,-10,-3,9,8,8,13,16,16,15,10,2,-9,-9,-4,0,0,13,20,25,28,27,30,25,12,3,2,-10,-25,-42,-38,-30,-22,-20,-18,-25,-40,-58,-62,-45,-8]],
[838, 1627, [2,11,25,30,36,33,28,18,3,2,12,16,22,17,18,22,38,36,35,30,10,3,14,36,28,27,27,15,10,6,7,0,-3,2,0,-12,-14,-14,-17,-20,-20,-20,-29,-33,-36,-36,-32,-24,-15,-3,25,33,30,30,25,18,12,0,-15,-12,-12,-28,-35,-40,-50,-40,-28,-15,-10,0,3,2,-8,-4,0,13,18,28,32,30,27,22,8,2,-3,2,-3,2,0,-2,-5,-7,-7,-3]],
[1636, 2314, [6,4,0,-10,-22,-27,-15,0,16,20,22,25,27,27,27,12,3,-6,-25,-28,-28,-28,-27,-22,-12,-3,6,10,17,17,16,5,2,-6,-8,-12,-18,-25,-25,-27,-32,-26,-22,-16,-10,-4,0,0,-2,-14,7,13,17,18,20,20,15,14,12,14,12,8,0,-7,-5,-3,5,7,12,5,2,0,-5,0,12,22,27,28,20,13,4]]
];
osci.forEach(([a, b, v]) => bars(a, b, 1353, v.map(t => 1353 - t)));
lines.forEach(([c, x, y, p]) => add(`<polyline class="${c}" transform="translate(${x} ${y})" points="${p}"/>`));

// peak and trough labels
text(288, 23, '日足'); text(280, 52, '18/09/28'); text(282, 76, '2451.0');
[['2018/11/29', '2297.0', 667, 275], ['2018/11/19', '2139.0', 608, 554], ['2018/12/25', '1850.0', 811, 974], ['2019/02/21', '2259.0', 1117, 333], ['2019/03/26', '2257.0', 1303, 335], ['2019/03/08', '2058.0', 1210, 672], ['2019/04/08', '1986.0', 1379, 777], ['2019/05/07', '2194.0', 1507, 426], ['2019/05/14', '2048.0', 1548, 686], ['2019/06/14', '2236.0', 1745, 365], ['2019/07/08', '2208.0', 1881, 407], ['2019/07/01', '2091.0', 1838, 625], ['2019/08/16', '2016.0', 2109, 684], ['2019/08/06', '1900.0', 2050, 903], ['2019/08/28', '1917.0', 2178, 878]].forEach(([day, price, x, y]) => { text(x, y, day, 'mid'); text(x, y + 23, price, 'mid'); });

// value axes
[['2500', 18], ['2400', 165], ['2300', 309], ['2200', 456], ['2100', 600], ['1900', 891], ['×千', 1024], ['100', 1060], ['80', 1098], ['60', 1138], ['40', 1178], ['20', 1216], ['0', 1256], ['50.00', 1301], ['0.00', 1361], ['-50.00', 1422], ['-100.00', 1483]].forEach(([s, y]) => text(2361, y, s));
text(295, 1033, '売買高 (5 ,25 ,75)'); text(288, 1286, 'MACD (5 ,20 ,9)');
add('<rect x="2334" y="721" width="78" height="26" fill="#ffffd8"/><circle cx="2326" cy="734" r="6" fill="#2030e0" stroke="#ccc" stroke-width="2"/>');
text(2338, 743, '2003.0', 'tag');
add('<path fill="#ddd" d="M2349 144v8l-7-4zM2349 952v8l-7-4zM2349 1015v8l-7-4zM2349 1244v8l-7-4zM2349 1269v8l-7-4zM2349 1497v8l-7-4zM2317 999h10l-5-7zM2317 1252h10l-5-7zM2317 1505h10l-5-7z"/>');
document.getElementById('chart').innerHTML = out;
```
